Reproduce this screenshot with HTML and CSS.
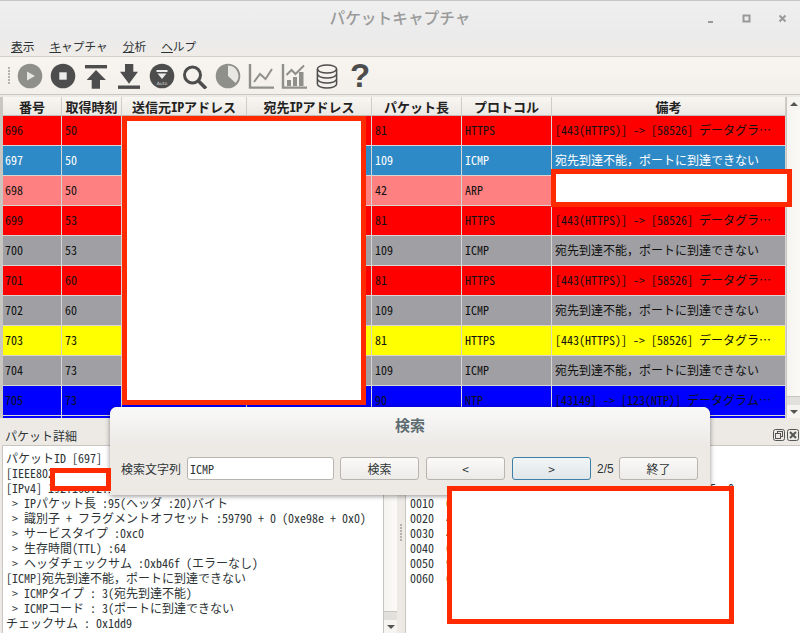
FILE: index.html
```html
<!DOCTYPE html>
<html lang="ja">
<head>
  <meta charset="UTF-8" />
  <title>パケットキャプチャ</title>
  <link rel="stylesheet" href="styles.css">
</head>
<body>
  <div class="window">
    <div class="titlebar">
      <span class="title">パケットキャプチャ</span>
      <div class="winbtns">
        <svg width="12" height="12" viewBox="0 0 12 12"><rect x="3" y="8" width="5" height="2" fill="#999"/></svg>
        <svg width="12" height="12" viewBox="0 0 12 12"><rect x="2.5" y="2.5" width="6" height="6" fill="none" stroke="#999" stroke-width="2"/></svg>
        <svg width="12" height="12" viewBox="0 0 12 12"><path d="M2.5 2.5l6 6M8.5 2.5l-6 6" stroke="#999" stroke-width="2"/></svg>
      </div>
    </div>

    <div class="menubar">
      <span><u>表</u>示</span>
      <span><u>キ</u>ャプチャ</span>
      <span><u>分</u>析</span>
      <span><u>ヘ</u>ルプ</span>
    </div>

    <div class="toolbar">
      <div class="grip"></div>
      <svg class="tool" viewBox="0 0 26 26"><circle cx="13" cy="13" r="12.3" fill="#8f8f8c"/><path d="M10 8.5l8 4.5-8 4.5z" fill="#e6e6e4"/></svg>
      <svg class="tool" viewBox="0 0 26 26"><circle cx="13" cy="13" r="12.3" fill="#4d4d4d"/><rect x="9.3" y="9.3" width="7.4" height="7.4" fill="#ececec"/></svg>
      <svg class="tool" viewBox="0 0 26 26"><rect x="2" y="2" width="22" height="3.4" fill="#4d4d4d"/><path d="M13 7l10 10h-6v8.7H8.7V17H3.7z" fill="#4d4d4d"/></svg>
      <svg class="tool" viewBox="0 0 26 26"><rect x="2" y="22.5" width="22" height="3.4" fill="#4d4d4d"/><path d="M9 1h8.3v7.7H22L13 20.8 4 8.7h5z" fill="#4d4d4d"/></svg>
      <svg class="tool" viewBox="0 0 26 26"><circle cx="13" cy="13" r="12.3" fill="#4d4d4d"/><rect x="7.5" y="7" width="11" height="2" fill="#ececec"/><path d="M8.5 10.5h9L13 16z" fill="#ececec"/><text x="13" y="22" class="auto-label">Auto</text></svg>
      <svg class="tool" viewBox="0 0 26 26"><circle cx="10.5" cy="12" r="8" fill="none" stroke="#4d4d4d" stroke-width="3"/><path d="M16.5 18l7.5 7.5" stroke="#4d4d4d" stroke-width="3.6"/></svg>
      <svg class="tool" viewBox="0 0 26 26"><circle cx="13" cy="13" r="12.3" fill="#8f8f8c"/><path d="M13 13V2.6A10.4 10.4 0 0 1 20.6 20z" fill="#e9e7e3"/></svg>
      <svg class="tool" viewBox="0 0 26 26"><path d="M2 1v23.6h24" fill="none" stroke="#8f8f8c" stroke-width="2.4"/><path d="M6 19l6-8 5.5 5L24 6" fill="none" stroke="#8f8f8c" stroke-width="2"/></svg>
      <svg class="tool" viewBox="0 0 26 26"><path d="M2 1v23.6h24" fill="none" stroke="#8f8f8c" stroke-width="2.4"/><path d="M5.5 12l5-5 4 4L23 2.5" fill="none" stroke="#8f8f8c" stroke-width="2"/><rect x="6" y="17" width="4" height="6" fill="#8f8f8c"/><rect x="12" y="14" width="4" height="9" fill="#8f8f8c"/><rect x="18" y="9" width="4.5" height="14" fill="#8f8f8c"/></svg>
      <svg class="tool" viewBox="0 0 26 26"><g fill="none" stroke="#4d4d4d" stroke-width="1.5"><ellipse cx="13" cy="6" rx="9.6" ry="4"/><path d="M3.4 6v15c0 2.2 4.3 4 9.6 4s9.6-1.8 9.6-4V6"/><path d="M3.4 11c0 2.2 4.3 4 9.6 4s9.6-1.8 9.6-4M3.4 16c0 2.2 4.3 4 9.6 4s9.6-1.8 9.6-4"/></g></svg>
      <span class="help">?</span>
    </div>

    <div class="list">
      <div class="list-view">
        <table class="packets">
          <colgroup>
            <col class="c-no"><col class="c-time"><col class="c-ip"><col class="c-ip"><col class="c-len"><col class="c-proto"><col>
          </colgroup>
          <thead>
            <tr><th>番号</th><th>取得時刻</th><th>送信元IPアドレス</th><th>宛先IPアドレス</th><th>パケット長</th><th>プロトコル</th><th>備考</th></tr>
          </thead>
          <tbody>
            <tr class="red"><td>696</td><td>50</td><td></td><td></td><td>81</td><td>HTTPS</td><td>[443(HTTPS)] -&gt; [58526] データグラ…</td></tr>
            <tr class="sel"><td>697</td><td>50</td><td></td><td></td><td>109</td><td>ICMP</td><td>宛先到達不能，ポートに到達できない</td></tr>
            <tr class="pink"><td>698</td><td>50</td><td></td><td></td><td>42</td><td>ARP</td><td></td></tr>
            <tr class="red"><td>699</td><td>53</td><td></td><td></td><td>81</td><td>HTTPS</td><td>[443(HTTPS)] -&gt; [58526] データグラ…</td></tr>
            <tr class="gray"><td>700</td><td>53</td><td></td><td></td><td>109</td><td>ICMP</td><td>宛先到達不能，ポートに到達できない</td></tr>
            <tr class="red"><td>701</td><td>60</td><td></td><td></td><td>81</td><td>HTTPS</td><td>[443(HTTPS)] -&gt; [58526] データグラ…</td></tr>
            <tr class="gray"><td>702</td><td>60</td><td></td><td></td><td>109</td><td>ICMP</td><td>宛先到達不能，ポートに到達できない</td></tr>
            <tr class="yellow"><td>703</td><td>73</td><td></td><td></td><td>81</td><td>HTTPS</td><td>[443(HTTPS)] -&gt; [58526] データグラ…</td></tr>
            <tr class="gray"><td>704</td><td>73</td><td></td><td></td><td>109</td><td>ICMP</td><td>宛先到達不能，ポートに到達できない</td></tr>
            <tr class="blue"><td>705</td><td>73</td><td></td><td></td><td>90</td><td>NTP</td><td>[43149] -&gt; [123(NTP)] データグラム…</td></tr>
            <tr class="blue"><td></td><td></td><td></td><td></td><td></td><td></td><td></td></tr>
          </tbody>
        </table>
      </div>
      <div class="scrollbar">
        <div class="arrow up"></div>
        <div class="thumb"></div>
        <div class="arrow down"></div>
      </div>
    </div>

    <div class="docks">
      <div class="dock dock-left">
        <div class="dock-title">パケット詳細</div>
        <div class="dock-body">
          <pre class="details">パケットID [697]
[IEEE802.3]
[IPv4] 192.168.2.1
 &gt; IPパケット長 :95(ヘッダ :20)バイト
 &gt; 識別子 + フラグメントオフセット :59790 + 0 (0xe98e + 0x0)
 &gt; サービスタイプ :0xc0
 &gt; 生存時間(TTL) :64
 &gt; ヘッダチェックサム :0xb46f (エラーなし)
[ICMP]宛先到達不能，ポートに到達できない
 &gt; ICMPタイプ : 3(宛先到達不能)
 &gt; ICMPコード : 3(ポートに到達できない
チェックサム : 0x1dd9</pre>
          <div class="scrollbar">
            <div class="arrow up"></div>
            <div class="thumb"></div>
            <div class="arrow down"></div>
          </div>
        </div>
      </div>
      <div class="splitter"><div class="grip"></div></div>
      <div class="dock dock-right">
        <div class="dock-title dock-title-right">
          <svg width="12" height="12" viewBox="0 0 12 12" fill="none" stroke="#555"><rect x=".5" y=".5" width="11" height="11" rx="2"/><rect x="4.5" y="2.5" width="5" height="5"/><rect x="2.5" y="4.5" width="5" height="5" fill="#edeae6"/></svg>
          <svg width="12" height="12" viewBox="0 0 12 12" fill="none" stroke="#555"><rect x=".5" y=".5" width="11" height="11" rx="2"/><path d="M3 3l6 6M9 3L3 9" stroke-width="2"/></svg>
        </div>
        <pre class="hex">


                                                  5  0
0010  00 5f
0020  4a 01
0030  45 00
0040  6f 6d
0050  9c 21
0060  6c 65</pre>
      </div>
    </div>

    <!-- 検索ダイアログ -->
    <div class="dialog">
      <div class="dialog-title">検索</div>
      <div class="dialog-body">
        <label class="dialog-label">検索文字列</label>
        <input class="dialog-input" type="text" value="ICMP">
        <button class="btn btn-search">検索</button>
        <button class="btn btn-nav">&lt;</button>
        <button class="btn btn-nav btn-focus">&gt;</button>
        <span class="count">2/5</span>
        <button class="btn btn-nav btn-end">終了</button>
      </div>
    </div>

    <!-- 塗りつぶし -->
    <div class="mask mask-ip"></div>
    <div class="mask mask-note"></div>
    <div class="mask mask-mac"></div>
    <div class="mask mask-hex"></div>
  </div>
</body>
</html>
```

FILE: styles.css
```css
* {
  box-sizing: border-box;
}
body {
  margin: 0;
  background: #fff;
  font-family: "Noto Sans CJK JP", "Noto Sans", sans-serif;
  font-size: 12px;
  color: #2e3436;
}
.window {
  position: relative;
  display: flex;
  flex-direction: column;
  width: 800px;
  height: 633px;
  overflow: hidden;
  background: #edeae6;
  border-top: 1px solid #c9c7c4;
}
.titlebar {
  position: relative;
  height: 33px;
  flex-shrink: 0;
  display: flex;
  align-items: center;
  justify-content: center;
  background: linear-gradient(#efefef, #ebebeb);
}
.title {
  font-size: 15.7px;
  font-weight: 500;
  color: #9a9a9a;
}
.winbtns {
  position: absolute;
  right: 11px;
  top: 12px;
  display: flex;
  gap: 24px;
}
.menubar {
  height: 23px;
  flex-shrink: 0;
  display: flex;
  align-items: center;
  gap: 15px;
  padding-left: 11px;
  font-size: 11.7px;
  background: linear-gradient(#ebebeb, #efece8);
  border-bottom: 1px solid #d3cfca;
}
.toolbar {
  height: 38px;
  flex-shrink: 0;
  display: flex;
  align-items: center;
  padding-left: 8px;
  background: linear-gradient(#f8f5f1, #f3f0eb);
  border-bottom: 1px solid #c9c6c1;
}
.grip {
  width: 3px;
  height: 18px;
  margin-right: 6px;
  background: radial-gradient(circle at 1px 1px, #b5b2ad 1px, transparent 1px) 0 0 / 3px 3px;
}
.tool {
  width: 26px;
  height: 26px;
  margin-right: 7px;
  flex-shrink: 0;
}
.auto-label {
  font-family: "DejaVu Sans", sans-serif;
  font-size: 4.5px;
  fill: #ddd;
  text-anchor: middle;
}
.help {
  width: 26px;
  text-align: center;
  font-family: "Liberation Sans", sans-serif;
  font-weight: bold;
  font-size: 33px;
  line-height: 26px;
  color: #4d4d4d;
}
.list {
  height: 321px;
  margin-top: 2px;
  padding-left: 3px;
  flex-shrink: 0;
  display: flex;
  background: #c9c6c1;
}
.list-view {
  width: 783px;
  overflow: hidden;
  background: #fff;
}
.packets {
  width: 783px;
  table-layout: fixed;
  border-collapse: separate;
  border-spacing: 0;
}
.c-no { width: 59px; }
.c-time { width: 60px; }
.c-ip { width: 125px; }
.c-len { width: 90px; }
.c-proto { width: 90px; }
.packets th {
  height: 19px;
  padding: 1px 0 0;
  font-family: "Noto Sans Mono CJK JP", "Noto Sans CJK JP", monospace;
  font-size: 13px;
  font-weight: 700;
  line-height: 16px;
  color: #222;
  white-space: nowrap;
  background: linear-gradient(#f8f6f2, #ece9e4);
  border-right: 1px solid #cfccc7;
  border-bottom: 1px solid #bfbcb7;
}
.packets td {
  height: 30px;
  padding: 0 0 2px 3px;
  font-family: "Noto Sans Mono CJK JP", "Noto Sans CJK JP", monospace;
  font-size: 12px;
  white-space: nowrap;
  overflow: hidden;
  color: #111;
  border-right: 1px solid #d8d6d3;
  border-bottom: 1px solid #d8d6d3;
}
.packets td:first-child {
  padding-left: 2px;
}
.red td { background: #ff0000; }
.sel td { background: #2e8ac6; color: #fff; }
.pink td { background: #ff8080; }
.gray td { background: #a0a0a4; }
.yellow td { background: #ffff00; }
.blue td { background: #0000ff; }

.scrollbar {
  width: 14px;
  flex-shrink: 0;
  display: flex;
  flex-direction: column;
  background: #e2e0dc;
  border-left: 1px solid #c9c6c1;
}
.arrow {
  height: 13px;
  flex-shrink: 0;
  display: flex;
  align-items: center;
  justify-content: center;
  background: #f6f4f0;
}
.arrow::after {
  content: "";
  border-left: 4px solid transparent;
  border-right: 4px solid transparent;
}
.arrow.up::after {
  border-bottom: 4px solid #555;
}
.arrow.down::after {
  border-top: 4px solid #555;
}
.thumb {
  flex: 1;
  margin-bottom: 8px;
  background: linear-gradient(90deg, #f6f4f0, #fbfaf8);
  border-bottom: 1px solid #c9c6c1;
}
.docks {
  flex: 1;
  min-height: 0;
  display: flex;
  margin-top: 2px;
}
.dock {
  display: flex;
  flex-direction: column;
  min-width: 0;
}
.dock-left {
  width: 397px;
  padding-left: 2px;
}
.dock-right {
  flex: 1;
}
.dock-title {
  height: 25px;
  flex-shrink: 0;
  display: flex;
  align-items: center;
  padding: 5px 0 0 3px;
  font-size: 12px;
}
.dock-title-right {
  justify-content: flex-end;
  gap: 2px;
  padding-right: 1px;
}
.dock-body {
  flex: 1;
  min-height: 0;
  display: flex;
  background: #fff;
  border: 1px solid #c9c6c1;
  border-right: 0;
  border-bottom: 0;
}
.details,
.hex {
  margin: 0;
  font-family: "Noto Sans Mono CJK JP", "Noto Sans CJK JP", monospace;
  font-size: 12px;
  line-height: 15px;
  color: #2e3436;
}
.details {
  flex: 1;
  min-width: 0;
  padding: 4px 0 0 3px;
  overflow: hidden;
}
.splitter {
  width: 8px;
  flex-shrink: 0;
  display: flex;
  align-items: center;
  justify-content: center;
  padding-top: 13px;
}
.splitter .grip {
  margin: 0;
}
.hex {
  flex: 1;
  padding: 4px 0 0 4px;
  overflow: hidden;
  background: #fff;
  border-left: 1px solid #c9c6c1;
  border-top: 1px solid #c9c6c1;
}

/* ダイアログはウィンドウの上に重なる */
.dialog {
  position: absolute;
  left: 110px;
  top: 406px;
  width: 600px;
  height: 88px;
  display: flex;
  flex-direction: column;
  background: #edeae6;
  border-radius: 7px 7px 0 0;
  box-shadow: 0 1px 5px rgba(0, 0, 0, 0.45);
}
.dialog-title {
  height: 38px;
  flex-shrink: 0;
  display: flex;
  align-items: center;
  justify-content: center;
  padding-bottom: 4px;
  font-size: 15px;
  font-weight: 700;
  color: #5c6b70;
  background: linear-gradient(#f9f9f8, #eceae7);
  border-radius: 7px 7px 0 0;
}
.dialog-body {
  display: flex;
  align-items: center;
  padding: 12px 0 0 11px;
}
.dialog-label {
  width: 66px;
  font-size: 12px;
}
.dialog-input {
  width: 147px;
  height: 23px;
  padding: 0 2px;
  font-family: "Noto Sans Mono CJK JP", "Noto Sans CJK JP", monospace;
  font-size: 12px;
  color: #2e3436;
  background: #fff;
  border: 1px solid #b8b5b0;
  border-radius: 3px;
  outline: none;
}
.btn {
  width: 79px;
  height: 23px;
  padding: 0;
  font-family: "Noto Sans CJK JP", sans-serif;
  font-size: 12px;
  color: #2e3436;
  background: linear-gradient(#fbfaf9, #ecebe8);
  border: 1px solid #b8b5b0;
  border-radius: 3px;
}
.btn-search {
  margin-left: 6px;
}
.btn-nav {
  margin-left: 7px;
}
.btn-focus {
  background: linear-gradient(#f2f5f6, #e0e6e9);
  border-color: #3e7fa8;
}
.count {
  width: 22px;
  margin-left: 6px;
  font-family: "Liberation Sans", sans-serif;
  font-size: 12px;
}
.btn-end {
  margin-left: 0;
}

.mask {
  position: absolute;
  background: #fff;
  border: 5px solid #ff2a00;
}
.mask-ip {
  left: 122px;
  top: 115px;
  width: 244px;
  height: 289px;
}
.mask-note {
  left: 551px;
  top: 168px;
  width: 241px;
  height: 38px;
}
.mask-mac {
  left: 50px;
  top: 467px;
  width: 61px;
  height: 23px;
}
.mask-hex {
  left: 447px;
  top: 485px;
  width: 287px;
  height: 138px;
}
```
